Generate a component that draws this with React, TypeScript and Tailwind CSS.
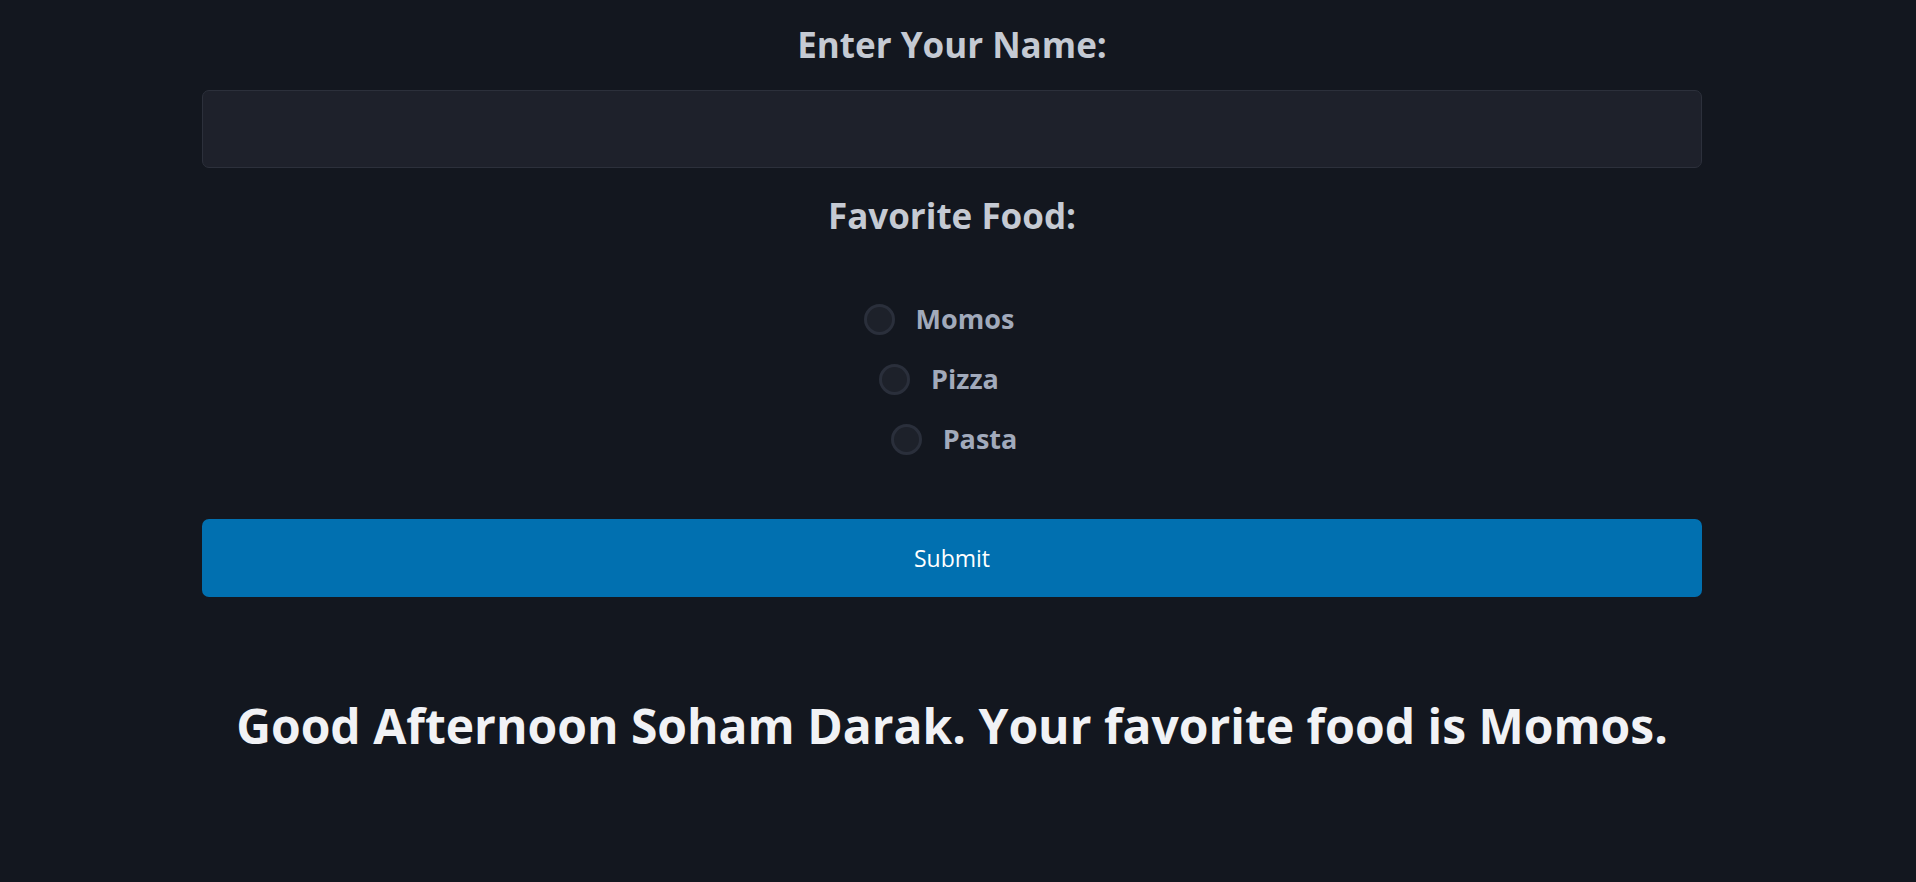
import { useState } from "react";

const foods = [
  { value: "Momos", shift: "pr-[26px]" },
  { value: "Pizza", shift: "pr-[26px]" },
  { value: "Pasta", shift: "pl-[4px]" },
];

export default function App() {
  const [name, setName] = useState("");
  const [food, setFood] = useState("");

  return (
    <div className="min-h-screen bg-[#13171f] font-['Open_Sans',sans-serif] pr-[12px]">
      <div className="w-[1500px] mx-auto flex flex-col">
        <h1 className="mt-[18px] text-center text-[35px] leading-[54px] font-bold text-[#c5cad3]">
          Enter Your Name:
        </h1>

        <input
          value={name}
          onChange={(e) => setName(e.target.value)}
          className="mt-[18px] h-[78px] w-full bg-[#1e212b] border border-[#2c303b] rounded-[7px] px-5 text-[24px] text-[#e5e7eb] outline-none"
        />

        <h2 className="mt-[21px] text-center text-[35px] leading-[54px] font-bold text-[#c5cad3]">
          Favorite Food:
        </h2>

        <div className="mt-[46px] mb-[2px] flex flex-col">
          {foods.map((f) => (
            <label
              key={f.value}
              className={`h-[60px] flex items-center justify-center gap-[21px] ${f.shift}`}
            >
              <input
                type="radio"
                name="food"
                value={f.value}
                checked={food === f.value}
                onChange={() => setFood(f.value)}
                className="appearance-none w-[31px] h-[31px] rounded-full bg-[#1d212a] border-[3px] border-[#2a2f3b]"
              />
              <span className="text-[27px] font-bold text-[#a1aabb]">
                {f.value}
              </span>
            </label>
          ))}
        </div>

        <button className="mt-[48px] h-[78px] w-full bg-[#0170b0] rounded-[7px] text-white text-[23px]">
          Submit
        </button>

        <h2 className="mt-[99px] text-center text-[48px] leading-[60px] font-bold text-[#f1f2f5]">
          Good Afternoon Soham Darak. Your favorite food is Momos.
        </h2>
      </div>
    </div>
  );
}
